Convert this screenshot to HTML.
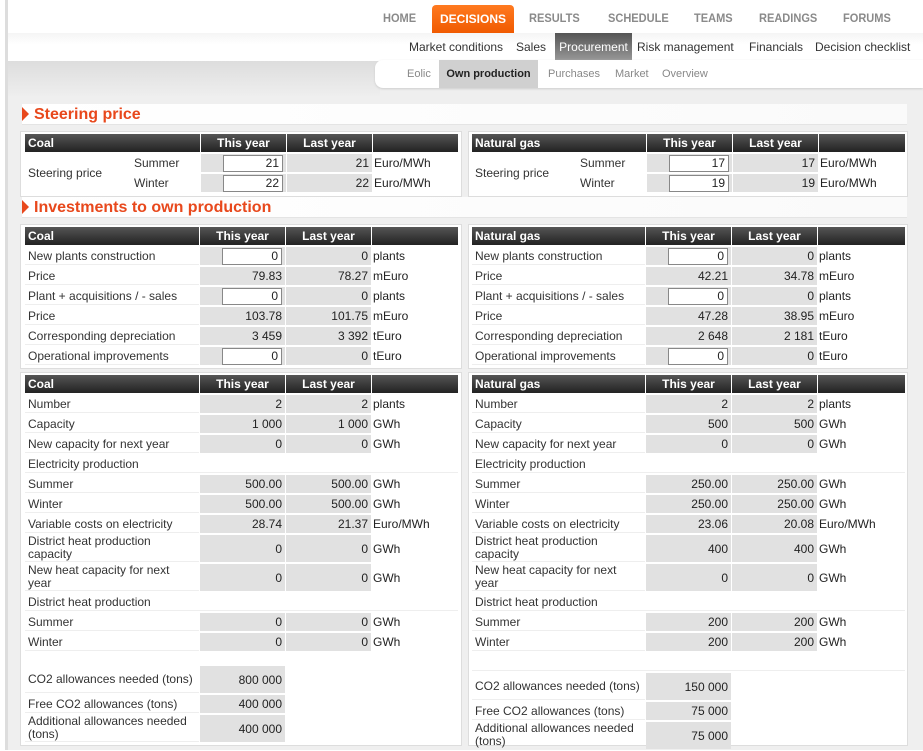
<!DOCTYPE html>
<html><head><meta charset="utf-8">
<style>
*{margin:0;padding:0;box-sizing:border-box}
body{width:923px;height:750px;overflow:hidden;background:#fff;font-family:"Liberation Sans",sans-serif;font-size:12px;color:#333;position:relative}
.abs{position:absolute}
#leftline{left:5px;top:0;width:3px;height:750px;background:#ddd}
#nav1{left:8px;top:0;width:915px;height:33px;background:#fff}
.n1{position:absolute;top:11px;font-size:12px;font-weight:bold;color:#8a8a8a;letter-spacing:0px;transform:scaleX(.92);transform-origin:left}
#dec{left:432px;top:5px;width:82px;height:28px;background:linear-gradient(#ff7a20,#f05a00);border-radius:4px 4px 0 0;color:#fff;font-weight:bold;font-size:12px;text-align:center;line-height:28px}
#nav2{left:8px;top:33px;width:915px;height:28px;background:linear-gradient(#f4f4f4,#fff 40%)}
.n2{position:absolute;top:40px;font-size:12px;color:#333}
#proc{left:555px;top:33px;width:77px;height:28px;background:linear-gradient(#555,#999);color:#fff;font-size:12px;line-height:28px;text-align:center}
#nav3l{left:8px;top:61px;width:372px;height:35px;background:linear-gradient(#ddd,#eee)}
#nav3{left:375px;top:60px;width:548px;height:28px;background:#fff;border-radius:8px 0 0 8px;box-shadow:0 1px 2px #ccc}
.n3{position:absolute;top:68px;font-size:11px;color:#888}
#own{left:439px;top:60px;width:99px;height:28px;background:#d0d0d0;font-size:11px;font-weight:bold;color:#222;line-height:28px;text-align:center}
#main{left:8px;top:88px;width:915px;height:662px;background:#efefef}
.h{position:absolute;left:22px;width:885px;height:21px;background:linear-gradient(90deg,#fff,#fafafa);font-weight:bold;font-size:16px;color:#e8481c;line-height:21px;padding-left:12px;border-bottom:1px solid #e4e4e4}
.h:before{content:"";position:absolute;left:0;top:3px;border-left:7px solid #e8481c;border-top:7px solid transparent;border-bottom:7px solid transparent}
.box{position:absolute;background:#fff;border:1px solid #ddd}
table{position:absolute;border-collapse:separate;border-spacing:1px 2px;table-layout:fixed}
td{height:18px;padding:0 3px;white-space:nowrap;vertical-align:middle;font-size:12px}
th{height:18px;background:linear-gradient(#555,#222);color:#fff;font-weight:bold;font-size:12px;text-align:center;padding:0 3px}
th.l{text-align:left}
td.v{background:#e1e1e1;text-align:right;color:#222}
td.lb{border-bottom:1px solid #eee}
td.u{padding-left:1px;color:#222}
td.t{white-space:normal;line-height:13px}
.in{display:inline-block;width:60px;height:17px;border:1px solid #888;background:#fff;text-align:right;padding-right:3px;line-height:15px}
</style></head><body>
<div class="abs" id="leftline"></div>
<div class="abs" id="nav1"></div>
<span class="n1" style="left:383px">HOME</span>
<div class="abs" id="dec">DECISIONS</div>
<span class="n1" style="left:529px">RESULTS</span>
<span class="n1" style="left:608px">SCHEDULE</span>
<span class="n1" style="left:694px">TEAMS</span>
<span class="n1" style="left:759px">READINGS</span>
<span class="n1" style="left:843px">FORUMS</span>
<div class="abs" id="nav2"></div>
<span class="n2" style="left:409px">Market conditions</span>
<span class="n2" style="left:516px">Sales</span>
<div class="abs" id="proc">Procurement</div>
<span class="n2" style="left:637px">Risk management</span>
<span class="n2" style="left:749px">Financials</span>
<span class="n2" style="left:815px">Decision checklist</span>
<div class="abs" id="main"></div>
<div class="abs" id="nav3l"></div>
<div class="abs" id="nav3"></div>
<span class="n3" style="left:407px">Eolic</span>
<div class="abs" id="own">Own production</div>
<span class="n3" style="left:548px">Purchases</span>
<span class="n3" style="left:615px">Market</span>
<span class="n3" style="left:662px">Overview</span>

<div class="h" style="top:104px">Steering price</div>
<div class="h" style="top:197px">Investments to own production</div>

<div class="box" style="left:20px;top:131px;width:442px;height:66px"></div>
<div class="box" style="left:468px;top:131px;width:440px;height:66px"></div>
<div class="box" style="left:20px;top:224px;width:442px;height:145px"></div>
<div class="box" style="left:468px;top:224px;width:440px;height:145px"></div>
<div class="box" style="left:20px;top:372px;width:442px;height:374px"></div>
<div class="box" style="left:468px;top:372px;width:440px;height:374px"></div>

<!-- steering left -->
<table style="left:24px;top:132px;width:435px">
<colgroup><col style="width:105px"><col style="width:69px"><col style="width:85px"><col style="width:85px"><col></colgroup>
<tr><th class="l" colspan="2">Coal</th><th>This year</th><th>Last year</th><th></th></tr>
<tr><td rowspan="2">Steering price</td><td>Summer</td><td class="v"><span class="in">21</span></td><td class="v">21</td><td class="u">Euro/MWh</td></tr>
<tr><td>Winter</td><td class="v"><span class="in">22</span></td><td class="v">22</td><td class="u">Euro/MWh</td></tr>
</table>
<table style="left:471px;top:132px;width:435px">
<colgroup><col style="width:104px"><col style="width:69px"><col style="width:85px"><col style="width:85px"><col></colgroup>
<tr><th class="l" colspan="2">Natural gas</th><th>This year</th><th>Last year</th><th></th></tr>
<tr><td rowspan="2">Steering price</td><td>Summer</td><td class="v"><span class="in">17</span></td><td class="v">17</td><td class="u">Euro/MWh</td></tr>
<tr><td>Winter</td><td class="v"><span class="in">19</span></td><td class="v">19</td><td class="u">Euro/MWh</td></tr>
</table>

<!-- investments -->
<table style="left:24px;top:225px;width:435px">
<colgroup><col style="width:174px"><col style="width:85px"><col style="width:85px"><col></colgroup>
<tr><th class="l">Coal</th><th>This year</th><th>Last year</th><th></th></tr>
<tr><td class="lb">New plants construction</td><td class="v"><span class="in">0</span></td><td class="v">0</td><td class="u">plants</td></tr>
<tr><td class="lb">Price</td><td class="v">79.83</td><td class="v">78.27</td><td class="u">mEuro</td></tr>
<tr><td class="lb">Plant + acquisitions / - sales</td><td class="v"><span class="in">0</span></td><td class="v">0</td><td class="u">plants</td></tr>
<tr><td class="lb">Price</td><td class="v">103.78</td><td class="v">101.75</td><td class="u">mEuro</td></tr>
<tr><td class="lb">Corresponding depreciation</td><td class="v">3 459</td><td class="v">3 392</td><td class="u">tEuro</td></tr>
<tr><td class="lb">Operational improvements</td><td class="v"><span class="in">0</span></td><td class="v">0</td><td class="u">tEuro</td></tr>
</table>
<table style="left:471px;top:225px;width:435px">
<colgroup><col style="width:173px"><col style="width:85px"><col style="width:85px"><col></colgroup>
<tr><th class="l">Natural gas</th><th>This year</th><th>Last year</th><th></th></tr>
<tr><td class="lb">New plants construction</td><td class="v"><span class="in">0</span></td><td class="v">0</td><td class="u">plants</td></tr>
<tr><td class="lb">Price</td><td class="v">42.21</td><td class="v">34.78</td><td class="u">mEuro</td></tr>
<tr><td class="lb">Plant + acquisitions / - sales</td><td class="v"><span class="in">0</span></td><td class="v">0</td><td class="u">plants</td></tr>
<tr><td class="lb">Price</td><td class="v">47.28</td><td class="v">38.95</td><td class="u">mEuro</td></tr>
<tr><td class="lb">Corresponding depreciation</td><td class="v">2 648</td><td class="v">2 181</td><td class="u">tEuro</td></tr>
<tr><td class="lb">Operational improvements</td><td class="v"><span class="in">0</span></td><td class="v">0</td><td class="u">tEuro</td></tr>
</table>

<!-- production left -->
<table style="left:24px;top:373px;width:435px">
<colgroup><col style="width:174px"><col style="width:85px"><col style="width:85px"><col></colgroup>
<tr><th class="l">Coal</th><th>This year</th><th>Last year</th><th></th></tr>
<tr><td class="lb">Number</td><td class="v">2</td><td class="v">2</td><td class="u">plants</td></tr>
<tr><td class="lb">Capacity</td><td class="v">1 000</td><td class="v">1 000</td><td class="u">GWh</td></tr>
<tr><td class="lb">New capacity for next year</td><td class="v">0</td><td class="v">0</td><td class="u">GWh</td></tr>
<tr><td class="lb" colspan="4">Electricity production</td></tr>
<tr><td class="lb">Summer</td><td class="v">500.00</td><td class="v">500.00</td><td class="u">GWh</td></tr>
<tr><td class="lb">Winter</td><td class="v">500.00</td><td class="v">500.00</td><td class="u">GWh</td></tr>
<tr><td class="lb">Variable costs on electricity</td><td class="v">28.74</td><td class="v">21.37</td><td class="u">Euro/MWh</td></tr>
<tr><td class="lb t" style="height:27px">District heat production capacity</td><td class="v">0</td><td class="v">0</td><td class="u">GWh</td></tr>
<tr><td class="lb t" style="height:27px">New heat capacity for next year</td><td class="v">0</td><td class="v">0</td><td class="u">GWh</td></tr>
<tr><td class="lb" colspan="4">District heat production</td></tr>
<tr><td class="lb">Summer</td><td class="v">0</td><td class="v">0</td><td class="u">GWh</td></tr>
<tr><td class="lb">Winter</td><td class="v">0</td><td class="v">0</td><td class="u">GWh</td></tr>
<tr><td colspan="4" style="height:11px"></td></tr>
<tr><td class="lb t" style="height:27px">CO2 allowances needed (tons)</td><td class="v">800 000</td><td></td><td></td></tr>
<tr><td class="lb">Free CO2 allowances (tons)</td><td class="v">400 000</td><td></td><td></td></tr>
<tr><td class="lb t" style="height:27px">Additional allowances needed (tons)</td><td class="v">400 000</td><td></td><td></td></tr>
</table>

<table style="left:471px;top:373px;width:435px">
<colgroup><col style="width:173px"><col style="width:85px"><col style="width:85px"><col></colgroup>
<tr><th class="l">Natural gas</th><th>This year</th><th>Last year</th><th></th></tr>
<tr><td class="lb">Number</td><td class="v">2</td><td class="v">2</td><td class="u">plants</td></tr>
<tr><td class="lb">Capacity</td><td class="v">500</td><td class="v">500</td><td class="u">GWh</td></tr>
<tr><td class="lb">New capacity for next year</td><td class="v">0</td><td class="v">0</td><td class="u">GWh</td></tr>
<tr><td class="lb" colspan="4">Electricity production</td></tr>
<tr><td class="lb">Summer</td><td class="v">250.00</td><td class="v">250.00</td><td class="u">GWh</td></tr>
<tr><td class="lb">Winter</td><td class="v">250.00</td><td class="v">250.00</td><td class="u">GWh</td></tr>
<tr><td class="lb">Variable costs on electricity</td><td class="v">23.06</td><td class="v">20.08</td><td class="u">Euro/MWh</td></tr>
<tr><td class="lb t" style="height:27px">District heat production capacity</td><td class="v">400</td><td class="v">400</td><td class="u">GWh</td></tr>
<tr><td class="lb t" style="height:27px">New heat capacity for next year</td><td class="v">0</td><td class="v">0</td><td class="u">GWh</td></tr>
<tr><td class="lb" colspan="4">District heat production</td></tr>
<tr><td class="lb">Summer</td><td class="v">200</td><td class="v">200</td><td class="u">GWh</td></tr>
<tr><td class="lb">Winter</td><td class="v">200</td><td class="v">200</td><td class="u">GWh</td></tr>
<tr><td colspan="4" class="lb" style="height:18px"></td></tr>
<tr><td class="lb t" style="height:27px">CO2 allowances needed (tons)</td><td class="v">150 000</td><td></td><td></td></tr>
<tr><td class="lb">Free CO2 allowances (tons)</td><td class="v">75 000</td><td></td><td></td></tr>
<tr><td class="lb t" style="height:27px">Additional allowances needed (tons)</td><td class="v">75 000</td><td></td><td></td></tr>
</table>
</body></html>
